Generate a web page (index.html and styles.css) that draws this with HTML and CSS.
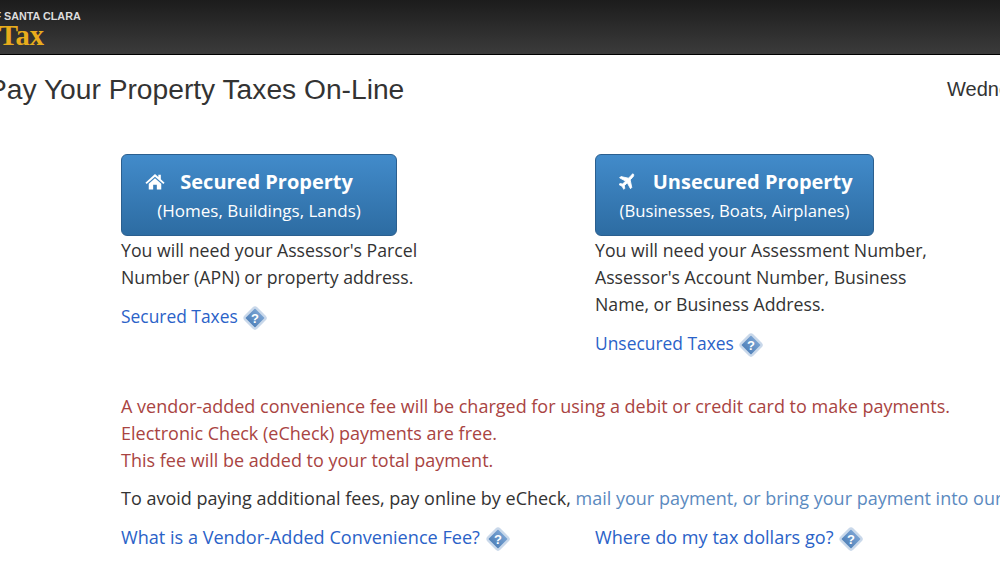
FILE: index.html
```html
<!DOCTYPE html>
<html lang="en">
<head>
    <meta charset="UTF-8">
    <meta name="viewport" content="width=device-width, initial-scale=1.0">
    <title>Pay Your Property Taxes On-Line</title>
    <link rel="stylesheet" href="styles.css">
</head>
<body>
    <svg class="defs" width="0" height="0">
        <defs>
            <linearGradient id="help-fill" x1="0" y1="0" x2="0" y2="1">
                <stop offset="0" stop-color="#7ba4d4"/>
                <stop offset="1" stop-color="#4f80b8"/>
            </linearGradient>
            <g id="help-icon">
                <rect x="5" y="5" width="16" height="16" rx="2" transform="rotate(45 13 13)" fill="url(#help-fill)" stroke="#c9d8ea" stroke-width="2.4"/>
                <text x="13" y="17.5" class="help-mark" text-anchor="middle">?</text>
            </g>
        </defs>
    </svg>

    <header class="topbar">
        <div class="logo">
            <div class="logo-county">OF SANTA CLARA</div>
            <div class="logo-tax">Tax</div>
        </div>
    </header>

    <div class="title-row">
        <h1>Pay Your Property Taxes On-Line</h1>
        <div class="today">Wednesday, May 8, 2024</div>
    </div>

    <main class="content">
        <div class="choices">
            <section class="choice">
                <a class="big-btn btn-secured" href="#">
                    <span class="btn-title">
                        <svg class="btn-icon" viewBox="0 0 24 20"><path d="M12 1 L16 4.6 V2 H19 V7.3 L23.5 11.4 L22 13 L12 4.2 L2 13 L.5 11.4 Z M4.5 12.6 L12 6 L19.5 12.6 V19.5 H14.2 V14 H9.8 V19.5 H4.5 Z"/></svg>
                        Secured Property
                    </span>
                    <span class="btn-sub">(Homes, Buildings, Lands)</span>
                </a>
                <p>You will need your Assessor's Parcel Number (APN) or property address.</p>
                <p class="help-line"><a href="#">Secured Taxes</a> <svg class="help" viewBox="0 0 26 26"><use href="#help-icon"/></svg></p>
            </section>
            <section class="choice">
                <a class="big-btn btn-unsecured" href="#">
                    <span class="btn-title">
                        <svg class="btn-icon plane" viewBox="0 0 20 20"><path d="M18.6 1.2 C19.6 2.2 19 4 17.6 5.4 L14.9 8.1 L16.8 17 L15.3 18.5 L11.5 11.5 L8 15 L8.6 18 L7.4 19.2 L5.4 15.6 L1.8 13.6 L3 12.4 L6 13 L9.5 9.5 L2.5 5.7 L4 4.2 L12.9 6.1 L15.6 3.4 C17 2 17.7 .4 18.6 1.2 Z"/></svg>
                        Unsecured Property
                    </span>
                    <span class="btn-sub">(Businesses, Boats, Airplanes)</span>
                </a>
                <p>You will need your Assessment Number, Assessor's Account Number, Business Name, or Business Address.</p>
                <p class="help-line"><a href="#">Unsecured Taxes</a> <svg class="help" viewBox="0 0 26 26"><use href="#help-icon"/></svg></p>
            </section>
        </div>

        <div class="fee-note">
            <div>A vendor-added convenience fee will be charged for using a debit or credit card to make payments.</div>
            <div>Electronic Check (eCheck) payments are free.</div>
            <div>This fee will be added to your total payment.</div>
        </div>

        <p class="avoid">To avoid paying additional fees, pay online by eCheck, <a href="#">mail your payment, or bring your payment into our office.</a></p>

        <div class="choices bottom-links">
            <p class="choice help-line"><a href="#">What is a Vendor-Added Convenience Fee?</a> <svg class="help" viewBox="0 0 26 26"><use href="#help-icon"/></svg></p>
            <p class="choice help-line"><a href="#">Where do my tax dollars go?</a> <svg class="help" viewBox="0 0 26 26"><use href="#help-icon"/></svg></p>
        </div>
    </main>
</body>
</html>
```

FILE: styles.css
```css
html, body {
    margin: 0;
    padding: 0;
    height: 563px;
    overflow: hidden;
    background-color: #fff;
}
body {
    font-family: "Open Sans", "Noto Sans", sans-serif;
    font-size: 18px;
    line-height: 27px;
    color: #333;
}
.defs {
    position: absolute;
}
.help-mark {
    font-family: "Liberation Sans", sans-serif;
    font-size: 13px;
    font-weight: bold;
    fill: #fff;
}
.topbar {
    height: 54px;
    background: linear-gradient(to bottom, #1c1c1c, #3b3b3b);
    border-bottom: 1px solid #000;
    overflow: hidden;
}
.logo {
    margin-left: -14px;
    padding-top: 10px;
}
.logo-county {
    font-family: "Liberation Sans", sans-serif;
    font-size: 10.8px;
    font-weight: bold;
    line-height: 12px;
    color: #ddd;
    white-space: nowrap;
}
.logo-tax {
    font-family: "Liberation Serif", serif;
    font-size: 28.5px;
    font-weight: bold;
    line-height: 27px;
    color: #e8ac1c;
    padding-left: 13px;
}
.title-row {
    display: flex;
    justify-content: space-between;
    width: 1259px;
    margin-left: -12px;
    padding-top: 17px;
}
h1 {
    font-family: "Liberation Sans", sans-serif;
    font-size: 28.2px;
    font-weight: normal;
    line-height: 34px;
    margin: 0;
    color: #333;
}
.today {
    font-family: "Liberation Sans", sans-serif;
    font-size: 20px;
    line-height: 34px;
    color: #333;
    white-space: nowrap;
    width: 300px;
}
.content {
    padding: 48px 0 0 121px;
    width: 1100px;
}
.choices {
    display: flex;
}
.choice {
    width: 474px;
    margin: 0;
    flex: none;
}
.choice p {
    margin: 0 0 12px;
    width: 345px;
    font-size: 17.7px;
}
.choice p.help-line {
    font-size: 17.4px;
}
a {
    color: #2a62c8;
    text-decoration: none;
}
.big-btn {
    display: inline-block;
    box-sizing: border-box;
    height: 82px;
    margin-bottom: 1px;
    padding: 12px 19px 0;
    border: 1px solid #2b5f8f;
    border-radius: 6px;
    background: linear-gradient(to bottom, #428bca, #2d6ca2);
    color: #fff;
    text-align: center;
    vertical-align: top;
}
.btn-secured {
    width: 276px;
}
.btn-secured .btn-title {
    padding-right: 20px;
}
.btn-unsecured {
    width: 279px;
}
.btn-unsecured .btn-sub {
    font-size: 16.7px;
}
.btn-title {
    display: block;
    font-size: 20px;
    font-weight: bold;
    line-height: 30px;
    white-space: nowrap;
}
.btn-icon {
    width: 20px;
    height: 17px;
    fill: #fff;
    margin-right: 10px;
    vertical-align: -1px;
}
.plane {
    stroke: #fff;
    stroke-width: 1;
    margin-right: 11px;
}
.btn-sub {
    display: block;
    font-size: 17px;
    line-height: 27px;
    white-space: nowrap;
}
.help-line {
    line-height: 27px;
    white-space: nowrap;
}
.help {
    width: 26px;
    height: 26px;
    vertical-align: -8px;
}
.fee-note {
    margin-top: 23px;
    color: #a94442;
}
.avoid {
    margin: 11px 0 12px;
    white-space: nowrap;
}
.avoid a {
    color: #5b8ac0;
}
.bottom-links {
    font-size: 18.1px;
}
```
